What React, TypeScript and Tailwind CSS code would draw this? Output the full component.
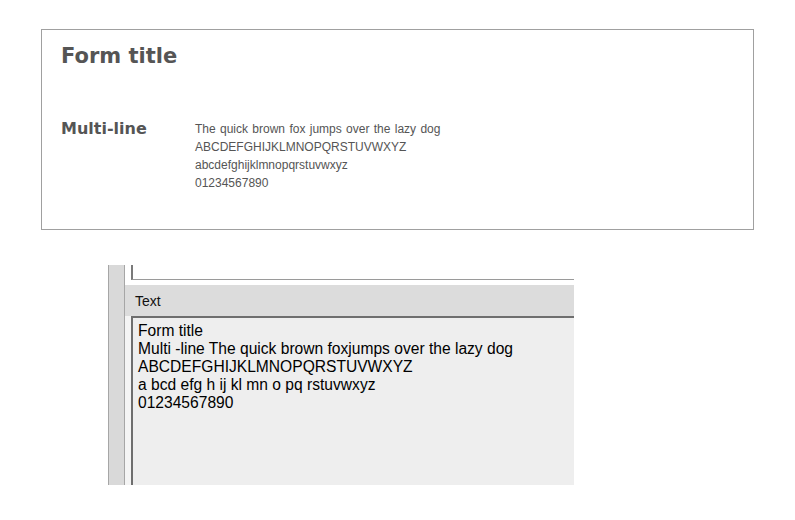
const sample = [
  'The quick brown fox jumps over the lazy dog',
  'ABCDEFGHIJKLMNOPQRSTUVWXYZ',
  'abcdefghijklmnopqrstuvwxyz',
  '01234567890',
];

const preview = [
  'Form title',
  'Multi -line The quick brown foxjumps over the lazy dog',
  'ABCDEFGHIJKLMNOPQRSTUVWXYZ',
  'a bcd efg h ij kl mn o pq rstuvwxyz',
  '01234567890',
];

function FormCard() {
  return (
    <div className="ml-[41px] mt-[29px] w-[713px] h-[201px] border border-[#a0a0a0] px-[19px] pt-[12px] text-[#555]">
      <h1 className="font-['DejaVu_Sans',sans-serif] font-bold text-[21px] leading-[28px]">
        Form title
      </h1>
      <div className="flex mt-[50px]">
        <div className="w-[134px] font-['DejaVu_Sans',sans-serif] font-bold text-[16px] leading-[18px]">
          Multi-line
        </div>
        <div className="font-['Liberation_Sans',Arial,sans-serif] text-[12px] leading-[18px] [word-spacing:1px]">
          {sample.map((line) => (
            <p key={line}>{line}</p>
          ))}
        </div>
      </div>
    </div>
  );
}

function TextPanel() {
  return (
    <div className="flex ml-[108px] mt-[35px] w-[466px] h-[220px] font-['Liberation_Sans',Arial,sans-serif]">
      <div className="w-[17px] bg-[#d9d9d9] border-l border-r border-[#a6a6a6]" />
      <div className="flex flex-col flex-1">
        <div className="h-[20px] bg-white">
          <div className="ml-[6px] h-[15px] border-l-2 border-b border-[#7a7a7a] border-b-[#9a9a9a]" />
        </div>
        <div className="h-[31px] bg-[#dcdcdc] flex items-center pl-[10px] pt-[2px] text-[14px] text-[#111]">
          Text
        </div>
        <div className="flex flex-1 bg-[#f4f4f4]">
          <div className="flex-1 ml-[6px] bg-[#eeeeee] border-l-2 border-t-2 border-[#6e6e6e] pl-[5px] pt-[4px] text-[15.6px] leading-[18px] text-black">
            {preview.map((line) => (
              <p key={line}>{line}</p>
            ))}
          </div>
        </div>
      </div>
    </div>
  );
}

export default function App() {
  return (
    <div className="w-[795px] h-[520px] bg-white overflow-hidden">
      <FormCard />
      <TextPanel />
    </div>
  );
}
